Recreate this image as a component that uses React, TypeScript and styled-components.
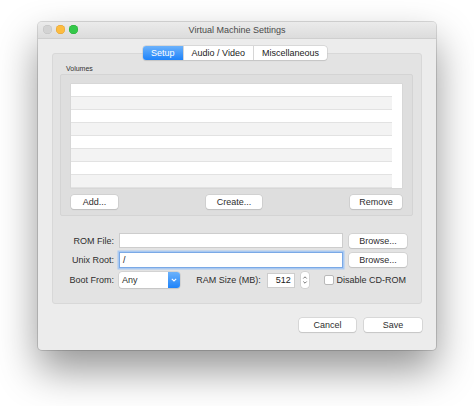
import React from 'react';
import styled, { createGlobalStyle } from 'styled-components';

const GlobalStyle = createGlobalStyle`
  html, body {
    margin: 0;
    padding: 0;
    background: #ffffff;
  }
  body {
    font-family: 'Liberation Sans', Arial, sans-serif;
    font-size: 9px;
    color: #2e2e2e;
  }
`;

const Page = styled.div`
  width: 474px;
  height: 406px;
  padding: 22px 0 0 38px;
  box-sizing: border-box;
`;

const Window = styled.div`
  width: 398px;
  height: 328px;
  background: #ececec;
  border-radius: 4px;
  box-shadow: 0 20px 40px rgba(0, 0, 0, 0.42), 0 0 0 1px rgba(0, 0, 0, 0.14);
  display: flex;
  flex-direction: column;
  overflow: hidden;
`;

const TitleBar = styled.div`
  height: 15px;
  padding-bottom: 1px;
  position: relative;
  display: flex;
  align-items: center;
  justify-content: center;
  background: linear-gradient(#ebebeb, #dcdcdc);
  border-bottom: 1px solid #cfcfcf;
  color: #4a4a4a;
  font-size: 9px;
`;

const Lights = styled.div`
  position: absolute;
  left: 5px;
  top: 3px;
  display: flex;
  gap: 4px;
`;

const Light = styled.span<{ $c: string; $b: string }>`
  width: 9px;
  height: 9px;
  border-radius: 50%;
  background: ${(p) => p.$c};
  box-shadow: inset 0 0 0 0.5px ${(p) => p.$b};
`;

const Body = styled.div`
  flex: 1;
  display: flex;
  flex-direction: column;
  padding: 7px 14px 18px;
`;

const TabStrip = styled.div`
  display: flex;
  align-self: center;
  margin-left: -4px;
  position: relative;
  z-index: 1;
  border-radius: 3px;
  background: #fff;
  box-shadow: 0 0 0 0.5px #c4c4c4, 0 1px 1px rgba(0, 0, 0, 0.12);
`;

const Tab = styled.div<{ $active?: boolean }>`
  height: 14px;
  padding: 0 8px;
  display: flex;
  align-items: center;
  font-size: 9px;
  color: ${(p) => (p.$active ? '#fff' : '#222')};
  background: ${(p) => (p.$active ? 'linear-gradient(#6cb2fb, #1e83fa)' : 'transparent')};
  border-radius: ${(p) => (p.$active ? '3px 0 0 3px' : '0')};
  & + & {
    border-left: 1px solid #d6d6d6;
  }
`;

const TabBox = styled.div`
  margin-top: -7px;
  height: 251px;
  box-sizing: border-box;
  background: #e3e3e3;
  border: 1px solid #d8d8d8;
  border-radius: 3px;
  padding: 10px 7px 0;
  display: flex;
  flex-direction: column;
`;

const GroupTitle = styled.div`
  font-size: 7px;
  color: #333;
  margin-left: 6px;
  height: 10px;
  line-height: 10px;
`;

const Group = styled.div`
  width: 353px;
  background: #dedede;
  border: 1px solid #d4d4d4;
  border-radius: 2px;
  padding: 9px 10px 6px;
  box-sizing: border-box;
  display: flex;
  flex-direction: column;
  gap: 7px;
`;

const Table = styled.div`
  height: 104px;
  background: #fff;
  display: flex;
  box-shadow: 0 0 0 0.5px #cfcfcf;
`;

const Rows = styled.div`
  flex: 1;
  display: flex;
  flex-direction: column;
`;

const Row = styled.div<{ $odd: boolean }>`
  height: 13px;
  box-sizing: border-box;
  background: ${(p) => (p.$odd ? '#f3f3f3' : '#ffffff')};
  border-bottom: 1px solid #e2e2e2;
`;

const Scroller = styled.div`
  width: 10px;
  background: #fff;
`;

const ButtonRow = styled.div`
  display: flex;
  justify-content: space-between;
`;

const Button = styled.button<{ $w: number }>`
  width: ${(p) => p.$w}px;
  height: 14px;
  padding: 0;
  font-family: 'Liberation Sans', Arial, sans-serif;
  font-size: 9px;
  color: #2e2e2e;
  background: #fff;
  border: none;
  border-radius: 3px;
  box-shadow: 0 0 0 0.5px #c3c3c3, 0 1px 1px rgba(0, 0, 0, 0.15);
`;

const Form = styled.div`
  margin-top: 17px;
  display: grid;
  grid-template-columns: 54px 224px 58px;
  column-gap: 5px;
  row-gap: 4px;
  align-items: center;
`;

const Label = styled.div`
  text-align: right;
  white-space: nowrap;
  font-size: 9px;
  color: #2e2e2e;
`;

const Field = styled.div<{ $focus?: boolean; $right?: boolean }>`
  height: ${(p) => (p.$focus ? 16 : 15)}px;
  box-sizing: border-box;
  background: #fff;
  border: 1px solid ${(p) => (p.$focus ? '#7aa9e6' : '#cdcdcd')};
  box-shadow: ${(p) => (p.$focus ? '0 0 0 1.5px #a9c9f2' : 'none')};
  padding: 0 3px;
  display: flex;
  align-items: center;
  justify-content: ${(p) => (p.$right ? 'flex-end' : 'flex-start')};
  font-size: 9px;
  color: #222;
`;

const BrowseButton = styled(Button)`
  margin-left: 1px;
`;

const Controls = styled.div`
  grid-column: 2 / 4;
  display: flex;
  align-items: center;
`;

const Popup = styled.div`
  width: 62px;
  height: 16px;
  box-sizing: border-box;
  display: flex;
  background: #fff;
  border-radius: 3px;
  box-shadow: 0 0 0 0.5px #c3c3c3, 0 1px 1px rgba(0, 0, 0, 0.12);
  overflow: hidden;
`;

const PopupText = styled.div`
  flex: 1;
  display: flex;
  align-items: center;
  padding-left: 3px;
  font-size: 9px;
`;

const PopupArrow = styled.div`
  width: 12px;
  display: flex;
  align-items: center;
  justify-content: center;
  background: linear-gradient(#6cb2fb, #1e83fa);
`;

const RamLabel = styled(Label)`
  margin-left: 16px;
`;

const RamField = styled(Field)`
  width: 28px;
  margin-left: 6px;
`;

const Stepper = styled.div`
  width: 8px;
  height: 16px;
  margin-left: 6px;
  border-radius: 3px;
  background: #fff;
  box-shadow: 0 0 0 0.5px #c3c3c3;
  display: flex;
  align-items: center;
  justify-content: center;
`;

const Check = styled.div`
  width: 10px;
  height: 10px;
  box-sizing: border-box;
  margin-left: 15px;
  background: #fff;
  border: 1px solid #b9b9b9;
  border-radius: 2px;
`;

const CheckLabel = styled.div`
  margin-left: 3px;
  font-size: 9px;
  white-space: nowrap;
`;

const Footer = styled.div`
  margin-top: auto;
  display: flex;
  justify-content: flex-end;
  gap: 8px;
`;

export default function App() {
  return (
    <Page>
      <GlobalStyle />
      <Window>
        <TitleBar>
          <Lights>
            <Light $c="#d3d3d3" $b="#c0c0c0" />
            <Light $c="#fdbc40" $b="#de9f34" />
            <Light $c="#34c84a" $b="#27aa35" />
          </Lights>
          Virtual Machine Settings
        </TitleBar>
        <Body>
          <TabStrip>
            <Tab $active>Setup</Tab>
            <Tab>Audio / Video</Tab>
            <Tab>Miscellaneous</Tab>
          </TabStrip>
          <TabBox>
            <GroupTitle>Volumes</GroupTitle>
            <Group>
              <Table>
                <Rows>
                  {Array.from({ length: 8 }).map((_, i) => (
                    <Row key={i} $odd={i % 2 === 1} />
                  ))}
                </Rows>
                <Scroller />
              </Table>
              <ButtonRow>
                <Button $w={47}>Add...</Button>
                <Button $w={56}>Create...</Button>
                <Button $w={52}>Remove</Button>
              </ButtonRow>
            </Group>
            <Form>
              <Label>ROM File:</Label>
              <Field />
              <BrowseButton $w={58}>Browse...</BrowseButton>
              <Label>Unix Root:</Label>
              <Field $focus>/</Field>
              <BrowseButton $w={58}>Browse...</BrowseButton>
              <Label>Boot From:</Label>
              <Controls>
                <Popup>
                  <PopupText>Any</PopupText>
                  <PopupArrow>
                    <svg width="6" height="4" viewBox="0 0 6 4">
                      <path d="M0.8 0.8 L3 3 L5.2 0.8" fill="none" stroke="#fff" strokeWidth="1.1" />
                    </svg>
                  </PopupArrow>
                </Popup>
                <RamLabel>RAM Size (MB):</RamLabel>
                <RamField $right>512</RamField>
                <Stepper>
                  <svg width="6" height="12" viewBox="0 0 6 12">
                    <path d="M1.3 4.5 L3 2.8 L4.7 4.5" fill="none" stroke="#666" strokeWidth="0.9" />
                    <path d="M1.3 7.5 L3 9.2 L4.7 7.5" fill="none" stroke="#666" strokeWidth="0.9" />
                  </svg>
                </Stepper>
                <Check />
                <CheckLabel>Disable CD-ROM</CheckLabel>
              </Controls>
            </Form>
          </TabBox>
          <Footer>
            <Button $w={57}>Cancel</Button>
            <Button $w={58}>Save</Button>
          </Footer>
        </Body>
      </Window>
    </Page>
  );
}
